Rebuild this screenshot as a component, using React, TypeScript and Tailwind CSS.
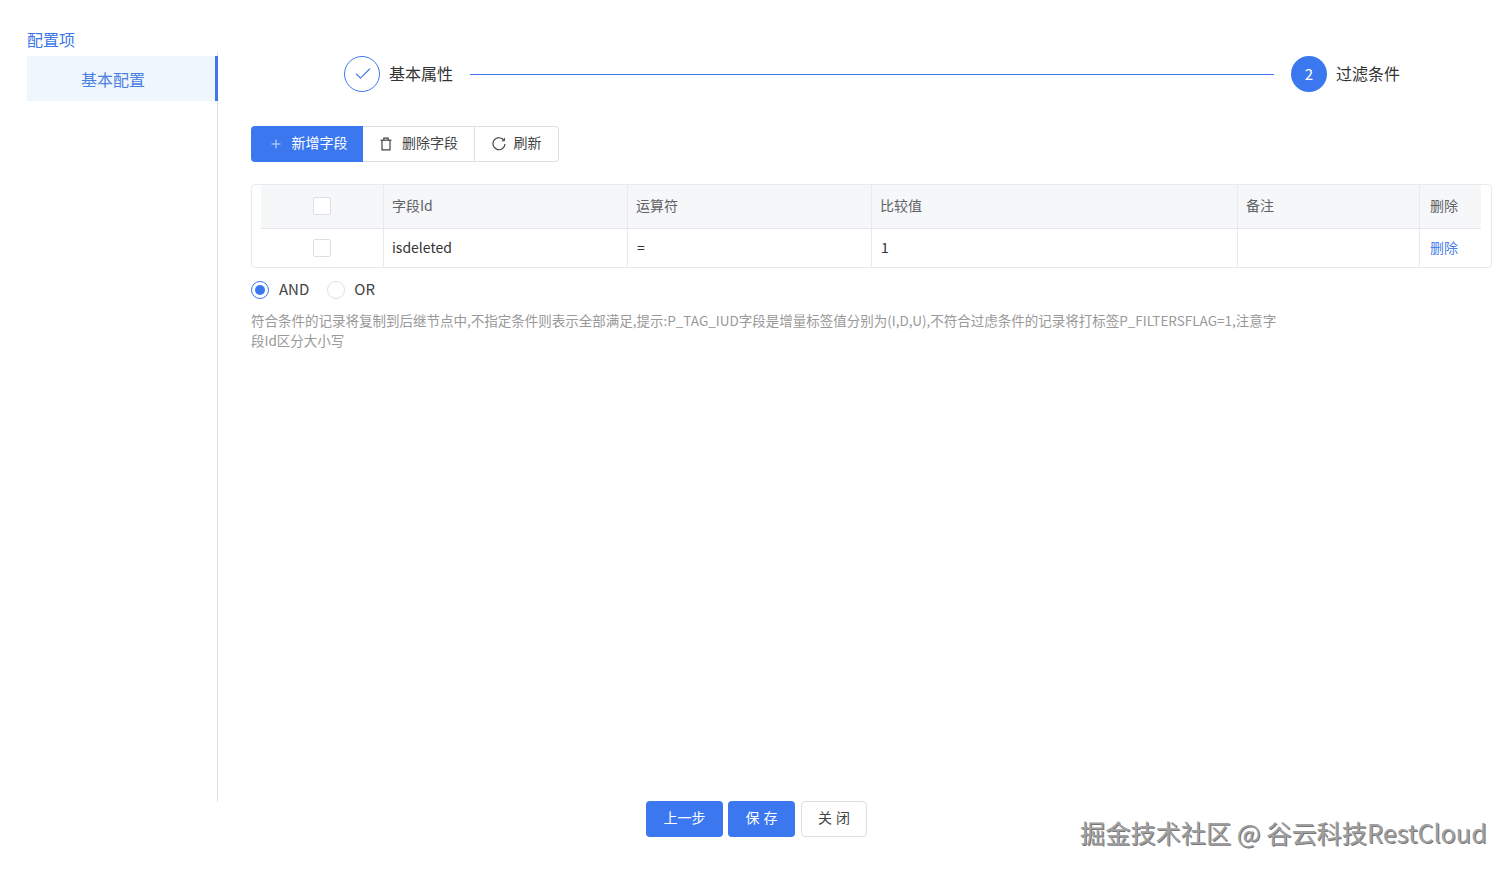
import { Check, Plus } from "lucide-react";

const font = "[font-family:'Noto_Sans_CJK_SC','Noto_Sans',sans-serif]";

function Box() {
  return <span className="block h-[18px] w-[18px] rounded-[2px] border border-[#dcdfe6] bg-white" />;
}

function Th({ className, children }: { className: string; children?: React.ReactNode }) {
  return (
    <div className={`flex h-full items-center border-r border-[#e8eaed] pb-[2px] pl-[8px] text-[14px] text-[#606266] ${className}`}>
      {children}
    </div>
  );
}

function Td({ className, children }: { className: string; children?: React.ReactNode }) {
  return (
    <div className={`flex h-full items-center border-r border-[#e8eaed] pb-[2px] pl-[8px] text-[14px] text-[#333] ${className}`}>
      {children}
    </div>
  );
}

function TrashIcon() {
  return (
    <svg width="14" height="14" viewBox="0 0 14 14" fill="none" stroke="currentColor" strokeWidth="1.2">
      <path d="M1.5 3.2h11" />
      <path d="M4.8 3V1.2h4.4V3" />
      <path d="M3 3.2v9.6h8V3.2" />
    </svg>
  );
}

function RefreshIcon() {
  return (
    <svg width="14" height="14" viewBox="0 0 14 14" fill="none" stroke="currentColor" strokeWidth="1.2">
      <path d="M12 3.4A6 6 0 1 0 13 7" />
      <path d="M12.4 1v2.8H9.8" strokeWidth="1" />
    </svg>
  );
}

export default function App() {
  return (
    <div className={`relative flex h-[872px] w-[1511px] flex-col overflow-hidden bg-white ${font}`}>
      <div className="flex h-[802px]">
        <div className="ml-[27px] flex w-[191px] shrink-0 flex-col">
          <div className="h-[28px] shrink-0" />
          <div className="flex h-[24px] shrink-0 items-start text-[16px] leading-[22px] text-[#3b77e8]">配置项</div>
          <div className="flex-1 border-r border-[#dfe1e5] pt-[4px]">
            <div className="flex h-[45px] w-[191px] items-center justify-center border-r-[3px] border-[#3f78e8] bg-[#eff6fe] pr-[16px] text-[16px] text-[#4a80e0]">
              基本配置
            </div>
          </div>
        </div>

        <div className="ml-[33px] min-w-0 flex-1 pr-[19px]">
          <div className="mt-[56px] flex h-[36px] items-center pl-[93px] pr-[92px]">
            <span className="flex h-[36px] w-[36px] items-center justify-center rounded-full border border-[#3f78e8] pl-[1px] text-[#3f78e8]">
              <Check size={20} strokeWidth={1.3} />
            </span>
            <span className="ml-[9px] pb-[2px] text-[16px] text-[#333]">基本属性</span>
            <span className="mx-[17px] h-px flex-1 bg-[#3f78e8]" />
            <span className="flex h-[36px] w-[36px] items-center justify-center rounded-full bg-[#3b78f0] text-[15px] text-white">2</span>
            <span className="ml-[9px] pb-[2px] text-[16px] text-[#333]">过滤条件</span>
          </div>

          <div className="mt-[34px] flex h-[36px] w-[308px] text-[14px]">
            <div className="flex w-[112px] items-center justify-center gap-[9px] rounded-l-[4px] bg-[#3b78f0] pl-[2px] text-white">
              <Plus size={14} strokeWidth={1.3} />
              <span className="pb-[3px]">新增字段</span>
            </div>
            <div className="flex w-[112px] items-center justify-center gap-[9px] border-y border-r border-[#dcdfe6] text-[#444]">
              <TrashIcon />
              <span className="pb-[3px]">删除字段</span>
            </div>
            <div className="flex flex-1 items-center justify-center gap-[8px] rounded-r-[4px] border-y border-r border-[#dcdfe6] text-[#444]">
              <RefreshIcon />
              <span className="pb-[3px]">刷新</span>
            </div>
          </div>

          <div className="mt-[22px] w-[1241px] rounded-[4px] border border-[#e8eaed]">
            <div className="ml-[9px] mr-[10px] flex h-[44px] border-b border-[#e4e6ea] bg-[#f6f7f9]">
              <Th className="w-[123px] justify-center pb-0 pl-0 pr-[9px]"><Box /></Th>
              <Th className="w-[244px]">字段Id</Th>
              <Th className="w-[244px]">运算符</Th>
              <Th className="w-[366px]">比较值</Th>
              <Th className="w-[182px]">备注</Th>
              <div className="flex h-full flex-1 items-center pb-[2px] pl-[10px] text-[14px] text-[#606266]">删除</div>
            </div>
            <div className="ml-[9px] flex h-[38px]">
              <Td className="w-[123px] justify-center pb-0 pl-0 pr-[9px] pt-[1px]"><Box /></Td>
              <Td className="w-[244px]">isdeleted</Td>
              <Td className="w-[244px] pl-[9px]">=</Td>
              <Td className="w-[366px] pl-[9px]">1</Td>
              <Td className="w-[182px]" />
              <div className="flex h-full flex-1 items-center pb-[2px] pl-[10px] text-[14px] text-[#4a80e8]">删除</div>
            </div>
          </div>

          <div className="mt-[12px] flex h-[20px] items-center text-[14px] text-[#444]">
            <span className="flex h-[18px] w-[18px] items-center justify-center rounded-full border border-[#3b78f0]">
              <span className="h-[10px] w-[10px] rounded-full bg-[#3b78f0]" />
            </span>
            <span className="ml-[10px] pb-[2px] text-[15px]">AND</span>
            <span className="ml-[18px] h-[18px] w-[18px] rounded-full border border-[#dcdfe6]" />
            <span className="ml-[9px] pb-[2px] text-[15px]">OR</span>
          </div>

          <p className="mt-[10px] w-[1040px] text-[13.5px] leading-[20px] text-[#999]">
            符合条件的记录将复制到后继节点中,不指定条件则表示全部满足,提示:P_TAG_IUD字段是增量标签值分别为(I,D,U),不符合过虑条件的记录将打标签P_FILTERSFLAG=1,注意字<br />段Id区分大小写
          </p>
        </div>
      </div>

      <div className="-mt-px flex justify-center">
        <div className="ml-[1px] flex h-[36px] text-[14px]">
          <div className="flex w-[77px] items-center justify-center rounded-[4px] bg-[#3b78f0] pb-[3px] pl-[1px] text-white">上一步</div>
          <div className="ml-[5px] flex w-[67px] items-center justify-center rounded-[4px] bg-[#3b78f0] pb-[3px] pl-[5px] tracking-[4px] text-white">保存</div>
          <div className="ml-[6px] flex w-[66px] items-center justify-center rounded-[4px] border border-[#dcdfe6] pb-[3px] pl-[5px] tracking-[4px] text-[#444]">关闭</div>
        </div>
      </div>

      <div className="absolute left-[1080px] top-[815px] whitespace-nowrap text-[25.2px] leading-[34px] text-[#a0a0a0] [text-shadow:1px_1px_0_#777]">
        掘金技术社区 @ 谷云科技RestCloud
      </div>
    </div>
  );
}
